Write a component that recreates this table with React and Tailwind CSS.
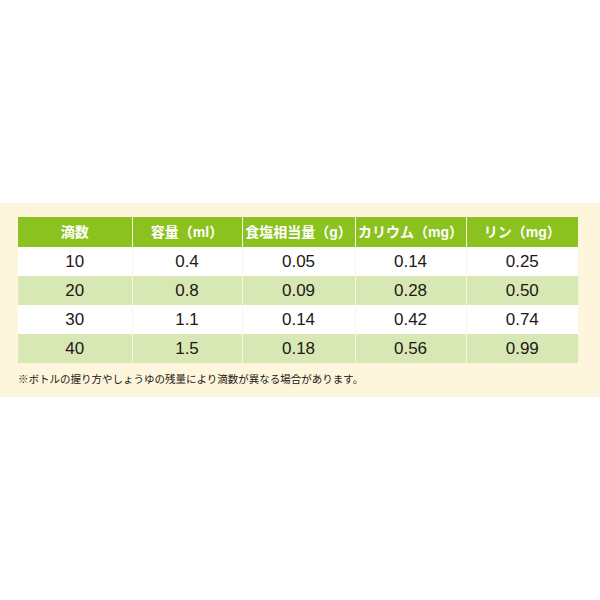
const cols = ["滴数", "容量（ml）", "食塩相当量（g）", "カリウム（mg）", "リン（mg）"];
const rows = [
  ["10", "0.4", "0.05", "0.14", "0.25"],
  ["20", "0.8", "0.09", "0.28", "0.50"],
  ["30", "1.1", "0.14", "0.42", "0.74"],
  ["40", "1.5", "0.18", "0.56", "0.99"],
];
const widths = ["w-[114px]", "w-[110px]", "w-[113px]", "w-[111px]", "w-[112px]"];

export default function App() {
  return (
    <div
      className="w-[600px] h-[600px] bg-white pt-[203px]"
      style={{ fontFamily: '"Liberation Sans", "Noto Sans CJK JP", sans-serif' }}
    >
      <div className="bg-[#fdf6dc] h-[194px] pt-[14px] pl-[18px]">
        <table className="border-collapse w-[560px] table-fixed">
          <thead>
            <tr className="bg-[#8cc21f] h-[30px]">
              {cols.map((c, i) => (
                <th
                  key={c}
                  className={`${widths[i]} text-white font-bold text-[14px] border-x-[1.5px] border-[#fdf6dc] first:border-l-0 last:border-r-0 p-0`}
                >
                  {c}
                </th>
              ))}
            </tr>
          </thead>
          <tbody>
            {rows.map((r, ri) => (
              <tr key={ri} className={`h-[29px] ${ri % 2 ? "bg-[#d8e8b4]" : "bg-white"}`}>
                {r.map((v, i) => (
                  <td
                    key={i}
                    className="text-center text-[17px] text-[#231815] border-x-[1.5px] border-[#fdf6dc] first:border-l-0 last:border-r-0 p-0"
                  >
                    {v}
                  </td>
                ))}
              </tr>
            ))}
          </tbody>
        </table>
        <p className="mt-[11px] text-[10.5px] text-[#231815] leading-none">
          ※ボトルの握り方やしょうゆの残量により滴数が異なる場合があります。
        </p>
      </div>
    </div>
  );
}
